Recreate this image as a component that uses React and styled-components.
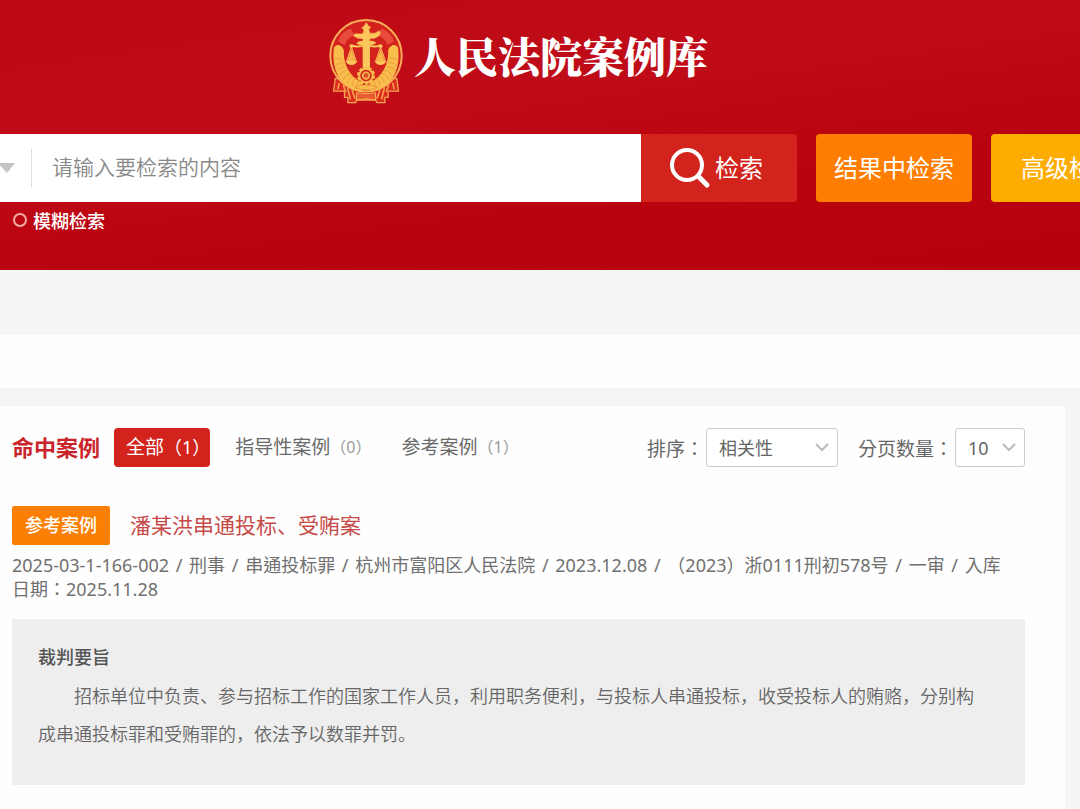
import React from "react";
import styled, { createGlobalStyle, css } from "styled-components";

const GlobalStyle = createGlobalStyle`
  *, *::before, *::after { box-sizing: border-box; }
  body {
    margin: 0;
    background: #f5f5f5;
    color: #666;
    font-family: "Noto Sans", "Noto Sans CJK SC", sans-serif;
    font-size: 18px;
    overflow-x: hidden;
  }
  h1, h2, h3, p { margin: 0; }
  button, input, select { font-family: inherit; }
`;

const Header = styled.header`
  min-height: 270px;
  padding-top: 18px;
  overflow: hidden;
  background: linear-gradient(172deg, #bd0913 0%, #c00c18 38%, #b9030f 66%, #b6010d 100%);
`;

const Brand = styled.div`
  display: flex;
  justify-content: center;
  gap: 10px;
  height: 116px;
  padding-right: 44px;
`;

const BrandTitle = styled.h1`
  color: #fff;
  font-family: "Noto Serif CJK SC", "Noto Sans CJK SC", serif;
  font-size: 42px;
  font-weight: 900;
  line-height: 74px;
`;

const SearchRow = styled.form`
  display: flex;
  height: 68px;
  margin-right: -67px;
`;

const SearchField = styled.div`
  display: flex;
  align-items: center;
  flex: 1;
  min-width: 0;
  background: #fff;
`;

const ScopeButton = styled.button`
  display: flex;
  align-items: center;
  width: 32px;
  height: 38px;
  padding: 0;
  border: 0;
  border-right: 1px solid #ddd;
  background: none;
`;

const SearchInput = styled.input`
  flex: 1;
  min-width: 0;
  height: 100%;
  padding: 0 20px 2px;
  border: 0;
  outline: 0;
  background: none;
  color: #555;
  font-size: 21px;
  font-weight: 350;
  &::placeholder { color: #888; opacity: 1; }
`;

const tones = { red: "#d2231c", orange: "#ff7d00", amber: "#ffac00" };

const ActionButton = styled.button`
  display: flex;
  align-items: center;
  justify-content: center;
  gap: 4px;
  flex: none;
  width: 156px;
  margin-left: ${(p) => (p.$joined ? 0 : 19)}px;
  padding: ${(p) => (p.$joined ? "0 6px 0 0" : "0")};
  border: 0;
  border-radius: ${(p) => (p.$joined ? "0 4px 4px 0" : "4px")};
  background: ${(p) => tones[p.$tone]};
  color: #fff;
  font-size: 24px;
  white-space: nowrap;
`;

const ActionText = styled.span`
  padding-bottom: 4px;
`;

const ModeLabel = styled.label`
  display: inline-flex;
  align-items: center;
  gap: 6px;
  padding-left: 13px;
  height: 36px;
  color: #fff;
  font-size: 18px;
  font-weight: 500;
`;

const Radio = styled.input`
  appearance: none;
  width: 14px;
  height: 14px;
  margin: 0;
  border: 2px solid #f3a9a4;
  border-radius: 50%;
`;

const Band = styled.div`
  height: 53px;
  margin: 65px 0 18px;
  background: #fefefe;
`;

const Card = styled.main`
  min-height: 403px;
  margin-right: 15px;
  padding: 22px 40px 24px 12px;
  background: #fefefe;
`;

const Toolbar = styled.div`
  display: flex;
  align-items: center;
  height: 39px;
  color: #666;
  white-space: nowrap;
`;

const HitTitle = styled.h2`
  margin-right: 14px;
  padding-bottom: 4px;
  color: #c9242a;
  font-size: 22px;
  font-weight: 700;
`;

const Tab = styled.button`
  display: flex;
  align-items: center;
  height: 39px;
  margin-right: 6px;
  padding: 0 12px 4px;
  border: 0;
  border-radius: 4px;
  background: none;
  color: #6a6a6a;
  font-size: 19px;
  ${(p) =>
    p.$active &&
    css`
      margin-right: 13px;
      padding: 0 0 4px 12px;
      background: #d2231c;
      color: #fff;
    `}
`;

const Count = styled.span`
  color: ${(p) => (p.$active ? "#fff" : "#999")};
  font-size: ${(p) => (p.$active ? 18 : 16)}px;
`;

const Filters = styled.div`
  display: flex;
  align-items: center;
  gap: 20px;
  margin-left: auto;
`;

const Filter = styled.label`
  display: flex;
  align-items: center;
  gap: 2px;
  font-family: "Noto Sans", "Noto Sans CJK TC", sans-serif;
  font-size: 19px;
`;

const SelectBox = styled.span`
  display: grid;
  align-items: center;
  width: ${(p) => p.$width}px;
  height: 39px;
  svg {
    grid-area: 1 / 1;
    justify-self: end;
    margin-right: 9px;
    pointer-events: none;
  }
`;

const Select = styled.select`
  grid-area: 1 / 1;
  width: 100%;
  height: 100%;
  padding: 0 12px;
  appearance: none;
  border: 1px solid #ccc;
  border-radius: 3px;
  background: #fff;
  color: #666;
  font-family: "Noto Sans", "Noto Sans CJK SC", sans-serif;
  font-size: 18px;
`;

const CaseHead = styled.div`
  display: flex;
  align-items: center;
  gap: 20px;
  height: 39px;
  margin-top: 39px;
`;

const Badge = styled.span`
  padding: 0 13px;
  border-radius: 2px;
  background: #fb7f05;
  color: #fff;
  font-size: 18px;
  font-weight: 500;
  line-height: 39px;
`;

const CaseLink = styled.a`
  padding-bottom: 4px;
  color: #c64a48;
  font-size: 21px;
  text-decoration: none;
`;

const Meta = styled.p`
  margin-top: 8px;
  padding-right: 12px;
  color: #707070;
  font-family: "Noto Sans", "Noto Sans CJK TC", sans-serif;
  font-size: 18px;
  line-height: 24px;
`;

const Separator = styled.span`
  margin: 0 2px;
`;

const Digest = styled.section`
  min-height: 166px;
  margin-top: 18px;
  padding: 19px 40px 31px 26px;
  background: #eee;
`;

const DigestTitle = styled.h3`
  color: #555;
  font-size: 18px;
  font-weight: 500;
  line-height: 39px;
`;

const DigestText = styled.p`
  color: #666;
  font-size: 18px;
  font-weight: 350;
  line-height: 38px;
  text-indent: 2em;
`;

const grains = Array.from({ length: 10 }, (_, i) => 172 - i * 9);

function WheatEar({ flip }) {
  return (
    <g transform={flip ? "translate(270 0) scale(-1 1)" : undefined}>
      <path d="M38 112 C46 96 64 104 68 120 C66 160 84 198 124 218 L124 244 C68 240 28 190 38 112Z" fill="#f9bd4b" />
      {grains.map((deg) => {
        const a = (deg * Math.PI) / 180;
        const x = 138 + Math.cos(a) * 88;
        const y = 132 + Math.sin(a) * 93;
        return (
          <g key={deg} transform={`translate(${x} ${y}) rotate(${deg + 90})`}>
            <path d="M-4 -13 Q2 -10 0 0 Q2 10 -4 13" fill="none" stroke="#e8923a" strokeWidth="2" />
          </g>
        );
      })}
    </g>
  );
}

function ScalePan({ x }) {
  return (
    <g>
      <path d={`M${x} 110 L${x - 15} 153 M${x} 110 L${x + 15} 153`} stroke="#fbc65a" strokeWidth="3" fill="none" />
      <path d={`M${x} 116 L${x - 13} 152 H${x + 13}Z`} fill="#f6b44a" />
      <path d={`M${x - 18} 152 H${x + 18} Q${x + 12} 164 ${x} 164 Q${x - 12} 164 ${x - 18} 152Z`} fill="#fbc65a" />
    </g>
  );
}

function Emblem() {
  return (
    <svg width="76" height="86" viewBox="21 22 228 260" aria-hidden="true">
      <path d="M42 205 L37 243 H70 V262 H80 V278 H104 L106 270 H164 L168 278 H192 V262 H202 V243 H233 L228 205Z" fill="#dc2a1f" stroke="#f3a650" strokeWidth="4" />
      <path d="M54 218 L50 238 M66 224 L74 246 M79 232 L88 268 M93 240 L102 266 M216 218 L220 238 M204 224 L196 246 M191 232 L182 268 M177 240 L168 266" stroke="#f3a04b" strokeWidth="5" />
      <path d="M106 248 Q135 254 164 248 V270 Q135 262 106 270Z" fill="#e85a32" stroke="#f8b24f" strokeWidth="3" />
      <circle cx="135" cy="136" r="108" fill="#d3221d" stroke="#f6ad58" strokeWidth="6" />
      <path d="M50 92 Q60 66 88 54 L102 76 Q78 80 70 104Z M220 92 Q210 66 182 54 L168 76 Q192 80 200 104Z" fill="#e84a3b" />
      <WheatEar />
      <WheatEar flip />
      <path d="M92 106 Q112 111 135 104 Q158 111 178 106" fill="none" stroke="#fbc65a" strokeWidth="6" />
      <circle cx="91" cy="107" r="6" fill="#fbc65a" />
      <circle cx="179" cy="107" r="6" fill="#fbc65a" />
      <ScalePan x={91} />
      <ScalePan x={179} />
      <path d="M125 96 H147 V184 H125Z" fill="#fbc65a" />
      <path d="M136 36 L142 46 L149 50 L143 57 L146 68 Q163 72 174 61 Q182 63 174 76 Q162 86 146 84 V92 Q158 91 165 97 Q156 105 146 102 H126 Q116 105 107 98 Q114 91 126 92 V84 Q108 86 98 76 Q98 68 109 70 Q119 72 127 68 L129 57 L122 52 L130 46Z" fill="#fbc65a" stroke="#fbc65a" strokeWidth="2" />
      <circle cx="135" cy="196" r="24" fill="none" stroke="#f8bc4c" strokeWidth="7" strokeDasharray="10 5" />
      <circle cx="135" cy="196" r="23" fill="#f9bf50" />
      <circle cx="135" cy="196" r="15" fill="none" stroke="#cf2a1f" strokeWidth="5" />
      <circle cx="135" cy="196" r="9" fill="none" stroke="#f5a648" strokeWidth="4" />
      <circle cx="135" cy="196" r="7" fill="#dc4a2a" />
      <path d="M100 232 Q135 216 170 232 Q135 248 100 232Z" fill="#f9bd4b" stroke="#e08535" strokeWidth="2" />
    </svg>
  );
}

function SearchIcon() {
  return (
    <svg width="42" height="42" viewBox="0 0 42 42" fill="none" stroke="#fff" strokeWidth="4" strokeLinecap="round" aria-hidden="true">
      <circle cx="18" cy="18" r="15" />
      <path d="M29 29 L38 38" strokeWidth="5" />
    </svg>
  );
}

function Chevron() {
  return (
    <svg width="14" height="9" viewBox="0 0 14 9" fill="none" stroke="#bbb" strokeWidth="2" aria-hidden="true">
      <path d="M1 1 L7 7 L13 1" />
    </svg>
  );
}

const tabs = [
  { name: "全部", count: 1, active: true },
  { name: "指导性案例", count: 0 },
  { name: "参考案例", count: 1 },
];

const facts = [
  "2025-03-1-166-002",
  "刑事",
  "串通投标罪",
  "杭州市富阳区人民法院",
  "2023.12.08",
  "（2023）浙0111刑初578号",
  "一审",
  "入库日期：2025.11.28",
];

export default function App() {
  return (
    <>
      <GlobalStyle />
      <Header>
        <Brand>
          <Emblem />
          <BrandTitle>人民法院案例库</BrandTitle>
        </Brand>
        <SearchRow onSubmit={(e) => e.preventDefault()}>
          <SearchField>
            <ScopeButton type="button" aria-label="检索范围">
              <svg width="15" height="10" viewBox="0 0 15 10" aria-hidden="true">
                <path d="M-2 0 H15 L7 10Z" fill="#c4c4c4" />
              </svg>
            </ScopeButton>
            <SearchInput aria-label="检索内容" placeholder="请输入要检索的内容" />
          </SearchField>
          <ActionButton $joined $tone="red" type="submit">
            <SearchIcon />
            <ActionText>检索</ActionText>
          </ActionButton>
          <ActionButton $tone="orange" type="button">
            <ActionText>结果中检索</ActionText>
          </ActionButton>
          <ActionButton $tone="amber" type="button">
            <ActionText>高级检索</ActionText>
          </ActionButton>
        </SearchRow>
        <ModeLabel>
          <Radio type="radio" name="mode" />
          模糊检索
        </ModeLabel>
      </Header>
      <Band />
      <Card>
        <Toolbar>
          <HitTitle>命中案例</HitTitle>
          {tabs.map((t) => (
            <Tab key={t.name} type="button" $active={t.active}>
              {t.name}
              <Count $active={t.active}>（{t.count}）</Count>
            </Tab>
          ))}
          <Filters>
            <Filter>
              排序：
              <SelectBox $width={132}>
                <Select defaultValue="相关性">
                  <option>相关性</option>
                </Select>
                <Chevron />
              </SelectBox>
            </Filter>
            <Filter>
              分页数量：
              <SelectBox $width={70}>
                <Select defaultValue="10">
                  <option>10</option>
                </Select>
                <Chevron />
              </SelectBox>
            </Filter>
          </Filters>
        </Toolbar>
        <CaseHead>
          <Badge>参考案例</Badge>
          <CaseLink href="#case">潘某洪串通投标、受贿案</CaseLink>
        </CaseHead>
        <Meta>
          {facts.map((fact, i) => (
            <React.Fragment key={fact}>
              {i > 0 && <Separator> / </Separator>}
              {fact}
            </React.Fragment>
          ))}
        </Meta>
        <Digest>
          <DigestTitle>裁判要旨</DigestTitle>
          <DigestText>
            招标单位中负责、参与招标工作的国家工作人员，利用职务便利，与投标人串通投标，收受投标人的贿赂，分别构成串通投标罪和受贿罪的，依法予以数罪并罚。
          </DigestText>
        </Digest>
      </Card>
    </>
  );
}
